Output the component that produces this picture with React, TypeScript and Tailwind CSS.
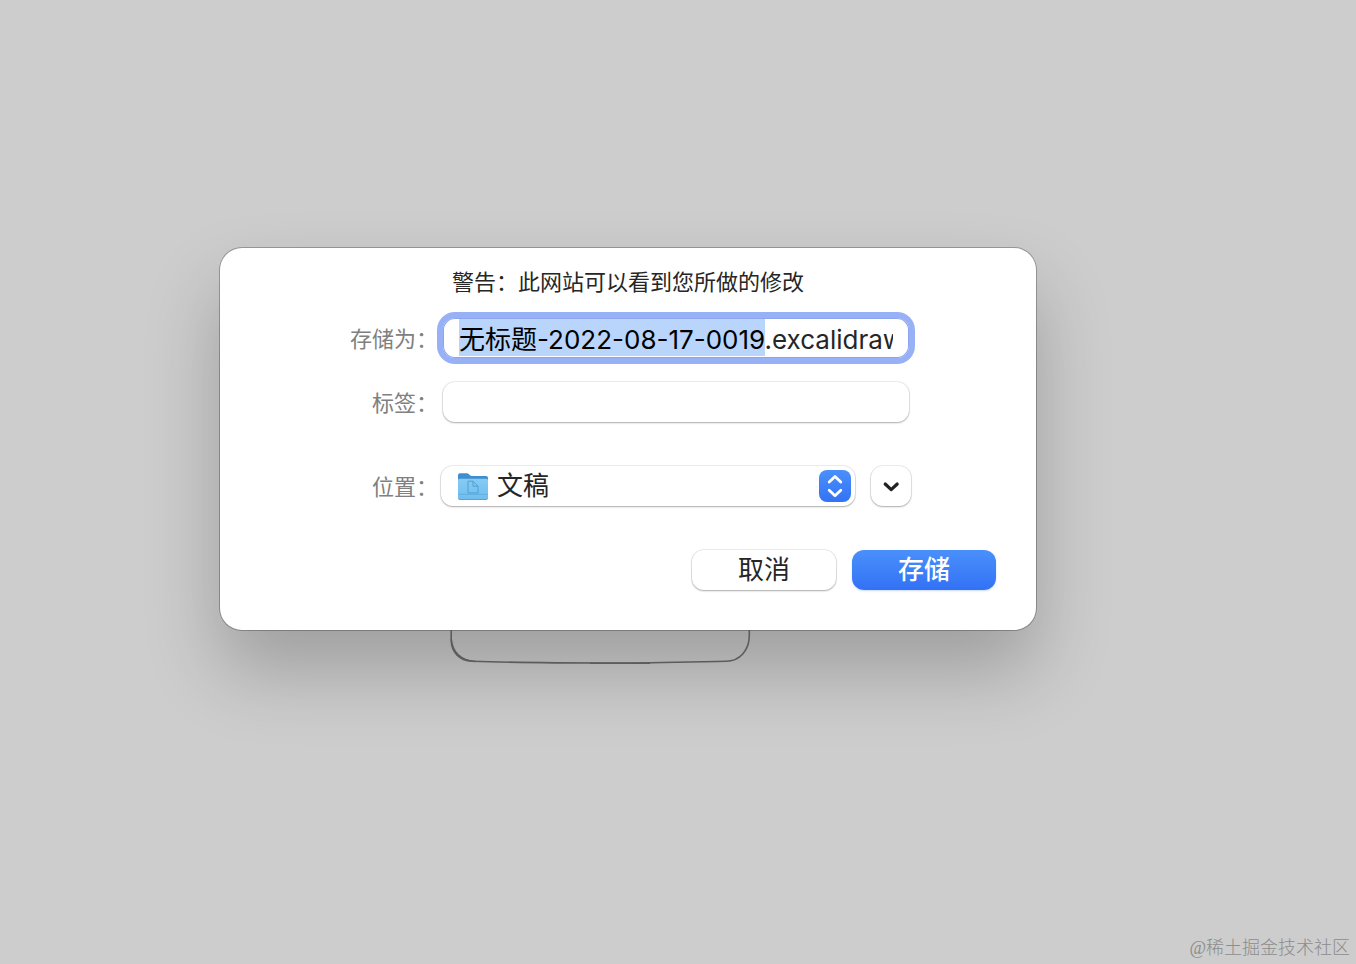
import { useEffect, useRef, useState, type ReactNode } from "react";

const FILE_STEM = "无标题-2022-08-17-0019";
const FILE_NAME = `${FILE_STEM}.excalidraw`;

const RAISED = "bg-white shadow-[0_0_0_1px_rgba(0,0,0,0.07),0_1px_2px_rgba(0,0,0,0.28)]";

export default function App() {
  return (
    <main className="flex min-h-screen flex-col bg-[#cdcdcd] pt-62 pl-55 font-['Inter','Noto_Sans_CJK_SC',sans-serif] text-[#262626]">
      <SaveDialog />
      <CanvasShape />
      <p className="mt-auto self-end pr-1.5 pb-1 font-['Liberation_Serif','Noto_Sans_CJK_SC',serif] text-lg leading-6 font-light text-[#8c8c8c]">
        @稀土掘金技术社区
      </p>
    </main>
  );
}

function SaveDialog() {
  const [name, setName] = useState(FILE_NAME);
  const [tags, setTags] = useState("");
  const nameRef = useRef<HTMLInputElement>(null);

  // Select the stem only, so typing keeps the extension. Selecting backward
  // keeps the start of a long name in view.
  useEffect(() => {
    const input = nameRef.current;
    if (!input) return;
    input.setSelectionRange(0, FILE_STEM.length, "backward");
    input.focus({ preventScroll: true });
    input.scrollLeft = 0;
    const frame = requestAnimationFrame(() => {
      input.scrollLeft = 0;
    });
    return () => cancelAnimationFrame(frame);
  }, []);

  return (
    <form
      role="dialog"
      aria-labelledby="save-warning"
      onSubmit={(e) => e.preventDefault()}
      className="relative z-10 w-full max-w-[816px] rounded-[22px] bg-white pt-5 pb-10 shadow-[0_0_0_1px_rgba(0,0,0,0.25),0_40px_76px_rgba(0,0,0,0.23)]"
    >
      <h1 id="save-warning" className="text-center text-[22px] leading-7 font-normal">
        警告：此网站可以看到您所做的修改
      </h1>

      <div className="mt-[22px] grid grid-cols-[221px_1fr] items-center gap-y-6 pr-[125px]">
        <FieldLabel htmlFor="file-name">存储为：</FieldLabel>
        <div className="mx-0.5">
          <input
            id="file-name"
            ref={nameRef}
            value={name}
            onChange={(e) => setName(e.target.value)}
            className="block h-10 w-full rounded-xl bg-white px-4 pb-0.5 text-[26px] leading-8 text-[#262626] shadow-[0_0_0_6px_#98b1f6,inset_0_0_0_1px_#8ba5ee] outline-none selection:bg-[#b9d5fb] selection:text-black"
          />
        </div>

        <FieldLabel htmlFor="file-tags">标签：</FieldLabel>
        <div className="mx-0.5">
          <input
            id="file-tags"
            value={tags}
            onChange={(e) => setTags(e.target.value)}
            className={`block h-10 w-full rounded-xl px-4 text-[26px] leading-8 outline-none ${RAISED}`}
          />
        </div>
      </div>

      <div className="mt-11 grid grid-cols-[221px_1fr] items-center pr-[125px]">
        <FieldLabel htmlFor="file-location">位置：</FieldLabel>
        <div className="flex gap-4">
          <div className="relative flex-1">
            <select
              id="file-location"
              className={`block h-10 w-full appearance-none rounded-xl pr-10 pl-14 text-[26px] leading-8 outline-none ${RAISED}`}
            >
              <option>文稿</option>
            </select>
            <FolderIcon className="pointer-events-none absolute top-1.5 left-4 h-7 w-8" />
            <span className="pointer-events-none absolute top-1 right-1 grid size-8 place-items-center rounded-lg bg-linear-to-b from-[#4a90fb] to-[#3472f4]">
              <svg viewBox="0 0 32 32" className="size-8" fill="none" stroke="white" strokeWidth="2.8" strokeLinecap="round" strokeLinejoin="round">
                <path d="M10.2 12 16 6.500 21.800 12M10.200 20.300 16 25.800l5.800-5.500" />
              </svg>
            </span>
          </div>
          <button type="button" aria-label="展开" className={`grid size-10 place-items-center rounded-xl ${RAISED}`}>
            <svg viewBox="0 0 40 40" className="size-10" fill="none" stroke="#222" strokeWidth="3.2" strokeLinecap="round" strokeLinejoin="round">
              <path d="m14.200 18 6 5.600 6-5.600" />
            </svg>
          </button>
        </div>
      </div>

      <div className="mt-11 flex justify-end gap-4 pr-10">
        <button type="button" className={`h-10 w-36 rounded-xl text-[26px] leading-8 ${RAISED}`}>
          取消
        </button>
        <button
          type="submit"
          className="h-10 w-36 rounded-xl bg-linear-to-b from-[#4a90fb] to-[#3371f5] text-[26px] leading-8 font-medium text-white shadow-[0_1px_2px_rgba(51,113,245,0.25)]"
        >
          存储
        </button>
      </div>
    </form>
  );
}

function FieldLabel({ htmlFor, children }: { htmlFor: string; children: ReactNode }) {
  return (
    <label htmlFor={htmlFor} className="pt-0.5 pr-[3px] text-right text-[22px] leading-7 text-[#808080]">
      {children}
    </label>
  );
}

function FolderIcon({ className }: { className?: string }) {
  return (
    <svg viewBox="0 0 32 28" className={className} aria-hidden="true">
      <defs>
        <linearGradient id="folder-front" x1="0" y1="0" x2="0" y2="1">
          <stop offset="0" stopColor="#86cbf4" />
          <stop offset="1" stopColor="#6fbdee" />
        </linearGradient>
      </defs>
      <path d="M1 3.200a2 2 0 0 1 2-2h6.500c1 0 1.500.3 2.200.9l1.600 1.300c.5.400 1 .600 1.700.600H29a2 2 0 0 1 2 2V20H1Z" fill="#3f8fce" />
      <path d="M1 8.300A1.500 1.500 0 0 1 2.500 6.800h27A1.500 1.500 0 0 1 31 8.300V26a2 2 0 0 1-2 2H3a2 2 0 0 1-2-2Z" fill="url(#folder-front)" />
      <path d="M1 22.300h30" stroke="#5aa9dd" strokeWidth="0.8" />
      <path d="M1.500 26.500c.3.700.9 1 1.500 1h26c.6 0 1.200-.3 1.500-1" fill="none" stroke="#5b9fca" strokeWidth="0.9" />
      <path d="M11 9.200h5l5 5v6.800H11zM16 9.200v5h5" fill="none" stroke="#4a9bd3" strokeWidth="0.9" strokeLinejoin="round" />
    </svg>
  );
}

// Lower edge of the sketched rectangle that the dialog covers.
function CanvasShape() {
  return (
    <svg viewBox="0 0 302 36" className="relative z-20 ml-[230px] h-9 w-[302px] shrink-0" fill="none" stroke="#5c5c5c" strokeWidth="1.6" aria-hidden="true">
      <path d="M1.200 0V10C1.500 22 9 30.500 22 31.200C60 32.500 110 33 160 33C205 33 240 32 276 31.300C290 31 299.500 20 299.300 5V0" />
      <path d="M1.200 9C2.500 22 10 30 25 31.500" />
      <path d="M140 33.300H200" />
    </svg>
  );
}
